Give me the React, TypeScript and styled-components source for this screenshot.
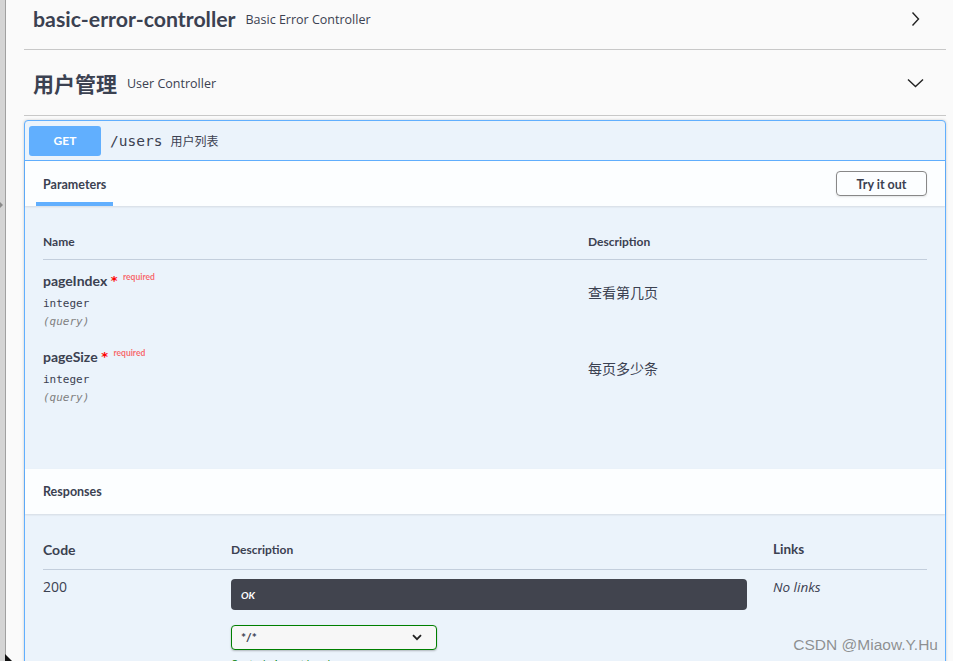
import React from "react";
import styled, { createGlobalStyle } from "styled-components";

const GlobalStyle = createGlobalStyle`
  html, body {
    margin: 0;
    padding: 0;
    background: #fafafa;
    overflow: hidden;
  }
`;

const sans = `"Open Sans", "Noto Sans CJK SC", sans-serif`;
const title = `"Lato", "Noto Sans CJK SC", sans-serif`;
const mono = `"DejaVu Sans Mono", "Liberation Mono", monospace`;

const Frame = styled.div`
  position: relative;
  display: flex;
  height: 661px;
  overflow: hidden;
  color: #3b4151;
  font-family: ${sans};
`;

const Gutter = styled.div`
  position: relative;
  flex: none;
  width: 5px;
  background: #d4d4d4;
  border-right: 1px solid #a0a0a0;

  &::before {
    content: "";
    position: absolute;
    top: 202px;
    left: 0;
    border-left: 3px solid #8a8a8a;
    border-top: 3px solid transparent;
    border-bottom: 3px solid transparent;
  }

  &::after {
    content: "";
    position: absolute;
    bottom: 0;
    left: 5px;
    width: 0;
    height: 0;
    border-left: 7px solid #111;
    border-top: 7px solid transparent;
  }
`;

const Main = styled.main`
  flex: 1;
  min-width: 0;
  padding: 0 7px 0 18px;
`;

const TagHeader = styled.div<{ $h: number; $top: number; $bottom: number }>`
  display: flex;
  align-items: center;
  box-sizing: border-box;
  height: ${(p) => p.$h}px;
  padding: ${(p) => p.$top}px 22px ${(p) => p.$bottom}px 9px;
  border-bottom: 1px solid #c8c8c8;
`;

const TagName = styled.h3<{ $size: number }>`
  margin: 0;
  font-family: ${title};
  font-size: ${(p) => p.$size}px;
  font-weight: 700;
  color: #3b4151;
`;

const TagDesc = styled.small`
  margin-left: 10px;
  font-size: 12.5px;
  color: #3b4151;
`;

const ChevronBox = styled.span`
  display: flex;
  align-items: center;
  justify-content: center;
  width: 17px;
  margin-left: auto;

  svg {
    fill: none;
    stroke: #222;
    stroke-width: 1.4;
  }
`;

const OpBlock = styled.div`
  margin-top: 4px;
  border: 1px solid #61affe;
  border-radius: 4px;
  background: #ebf3fb;
  box-shadow: 0 0 3px rgba(0, 0, 0, 0.19);
`;

const Summary = styled.div`
  display: flex;
  align-items: center;
  padding: 5px 4px 4px;
  border-bottom: 1px solid #61affe;
`;

const Method = styled.span`
  display: flex;
  align-items: center;
  justify-content: center;
  width: 72px;
  height: 30px;
  padding-bottom: 1px;
  box-sizing: border-box;
  border-radius: 3px;
  background: #61affe;
  color: #fff;
  font-family: ${title};
  font-size: 12px;
  font-weight: 700;
`;

const Path = styled.span`
  margin-left: 9px;
  font-family: ${mono};
  font-size: 14.5px;
  color: #3b4151;
`;

const PathDesc = styled.span`
  margin-left: 8px;
  font-size: 12px;
  color: #3b4151;
`;

const SectionHeader = styled.div`
  display: flex;
  align-items: center;
  height: 45px;
  padding: 0 18px;
  background: rgba(255, 255, 255, 0.85);
  box-shadow: 0 1px 2px rgba(0, 0, 0, 0.1);
`;

const SectionTitle = styled.h4`
  margin: 0;
  font-family: ${title};
  font-size: 12.5px;
  font-weight: 700;
  color: #3b4151;
`;

const Tab = styled.div`
  align-self: stretch;
  display: flex;
  align-items: center;
  margin-left: -7px;
  padding: 1px 7px 0;
  box-shadow: inset 0 -4px 0 #61affe;
`;

const TryButton = styled.button`
  margin-left: auto;
  width: 91px;
  height: 25px;
  padding-top: 2px;
  border: 1px solid #888;
  border-radius: 4px;
  background: transparent;
  font-family: ${title};
  font-size: 12.5px;
  font-weight: 700;
  color: #3b4151;
  box-shadow: 0 1px 2px rgba(0, 0, 0, 0.1);
`;

const SectionBody = styled.div<{ $pad: string }>`
  padding: ${(p) => p.$pad};
`;

const Grid = styled.div<{ $cols: string }>`
  display: grid;
  grid-template-columns: ${(p) => p.$cols};
`;

const HeadCell = styled.div<{ $size?: number; $below?: number }>`
  padding: 7px 0 ${(p) => p.$below ?? 9}px;
  line-height: 17px;
  border-bottom: 1px solid #c3cedc;
  font-family: ${title};
  font-size: ${(p) => p.$size ?? 12}px;
  font-weight: 700;
  color: #3b4151;
`;

const ParamCell = styled.div`
  padding: 11px 0 6px;
`;

const ParamName = styled.div`
  line-height: 20px;
  font-family: ${title};
  font-size: 14px;
  font-weight: 700;
  color: #3b4151;
`;

const Star = styled.span`
  position: relative;
  top: -1px;
  margin-left: 3px;
  color: #f00;
  font-family: ${mono};
  font-size: 13px;
`;

const Required = styled.span`
  position: relative;
  top: -6px;
  margin-left: 5px;
  color: rgba(255, 0, 0, 0.6);
  font-size: 8.5px;
  font-weight: 700;
`;

const ParamType = styled.div`
  margin-top: 3px;
  line-height: 16px;
  font-family: ${mono};
  font-size: 11px;
  color: #3b4151;
`;

const ParamIn = styled.div`
  margin-top: 2px;
  line-height: 16px;
  font-family: ${mono};
  font-size: 11px;
  font-style: italic;
  color: #808080;
`;

const DescCell = styled.div`
  padding-top: 23px;
  line-height: 20px;
  font-size: 14px;
  color: #3b4151;
`;

const RespCell = styled.div<{ $top: number }>`
  padding-top: ${(p) => p.$top}px;
  line-height: 20px;
  font-size: 14px;
  color: #3b4151;
`;

const NoLinks = styled.i`
  font-size: 13.5px;
`;

const OkBox = styled.div`
  display: flex;
  align-items: center;
  height: 31px;
  margin-right: 26px;
  padding: 0 10px;
  border-radius: 4px;
  background: #41444e;
  color: #fff;
  font-family: ${title};
  font-size: 10px;
  font-weight: 700;
  font-style: italic;
`;

const MediaSelect = styled.div`
  display: flex;
  align-items: center;
  box-sizing: border-box;
  width: 206px;
  height: 25px;
  margin-top: 15px;
  padding: 0 14px 0 9px;
  border: 1px solid #008000;
  border-radius: 4px;
  background: #f7f7f7;
  box-shadow: 0 1px 2px rgba(0, 0, 0, 0.25);
  font-family: ${title};
  font-size: 12px;
  font-weight: 700;
  color: #3b4151;

  svg {
    margin-left: auto;
    fill: none;
    stroke: #222;
    stroke-width: 1.8;
  }
`;

const AcceptNote = styled.div`
  margin-top: 4px;
  font-size: 10px;
  color: #008000;
`;

const Watermark = styled.div`
  position: absolute;
  right: 15px;
  bottom: 7px;
  font-family: "Liberation Sans", sans-serif;
  font-size: 15.5px;
  color: rgba(110, 110, 110, 0.75);
`;

const params = [
  { name: "pageIndex", desc: "查看第几页" },
  { name: "pageSize", desc: "每页多少条" },
];

export default function App() {
  return (
    <Frame>
      <GlobalStyle />
      <Gutter />
      <Main>
        <TagHeader $h={50} $top={0} $bottom={11}>
          <TagName $size={21.3}>basic-error-controller</TagName>
          <TagDesc>Basic Error Controller</TagDesc>
          <ChevronBox>
            <svg width="9" height="16" viewBox="0 0 9 16">
              <path d="M1.5 1.5 L7.5 8 L1.5 14.5" />
            </svg>
          </ChevronBox>
        </TagHeader>
        <TagHeader $h={66} $top={1} $bottom={0}>
          <TagName $size={21}>用户管理</TagName>
          <TagDesc>User Controller</TagDesc>
          <ChevronBox>
            <svg width="17" height="10" viewBox="0 0 17 10">
              <path d="M1 1.5 L8.5 8.5 L16 1.5" />
            </svg>
          </ChevronBox>
        </TagHeader>

        <OpBlock>
          <Summary>
            <Method>GET</Method>
            <Path>/users</Path>
            <PathDesc>用户列表</PathDesc>
          </Summary>

          <SectionHeader>
            <Tab>
              <SectionTitle>Parameters</SectionTitle>
            </Tab>
            <TryButton>Try it out</TryButton>
          </SectionHeader>
          <SectionBody $pad="20px 18px 57px">
            <Grid $cols="545px 1fr">
              <HeadCell>Name</HeadCell>
              <HeadCell>Description</HeadCell>
              {params.map((p) => (
                <React.Fragment key={p.name}>
                  <ParamCell>
                    <ParamName>
                      {p.name}
                      <Star>*</Star>
                      <Required>required</Required>
                    </ParamName>
                    <ParamType>integer</ParamType>
                    <ParamIn>(query)</ParamIn>
                  </ParamCell>
                  <DescCell>{p.desc}</DescCell>
                </React.Fragment>
              ))}
            </Grid>
          </SectionBody>

          <SectionHeader>
            <SectionTitle>Responses</SectionTitle>
          </SectionHeader>
          <SectionBody $pad="20px 18px 20px">
            <Grid $cols="188px 542px 1fr">
              <HeadCell $size={14} $below={11}>Code</HeadCell>
              <HeadCell $below={11}>Description</HeadCell>
              <HeadCell $size={13.5} $below={11}>Links</HeadCell>
              <RespCell $top={7}>200</RespCell>
              <RespCell $top={9}>
                <OkBox>OK</OkBox>
                <MediaSelect>
                  */*
                  <svg width="10" height="7" viewBox="0 0 10 7">
                    <path d="M1 1.2 L5 5.2 L9 1.2" />
                  </svg>
                </MediaSelect>
                <AcceptNote>Controls Accept header.</AcceptNote>
              </RespCell>
              <RespCell $top={7}>
                <NoLinks>No links</NoLinks>
              </RespCell>
            </Grid>
          </SectionBody>
        </OpBlock>
      </Main>
      <Watermark>CSDN @Miaow.Y.Hu</Watermark>
    </Frame>
  );
}
